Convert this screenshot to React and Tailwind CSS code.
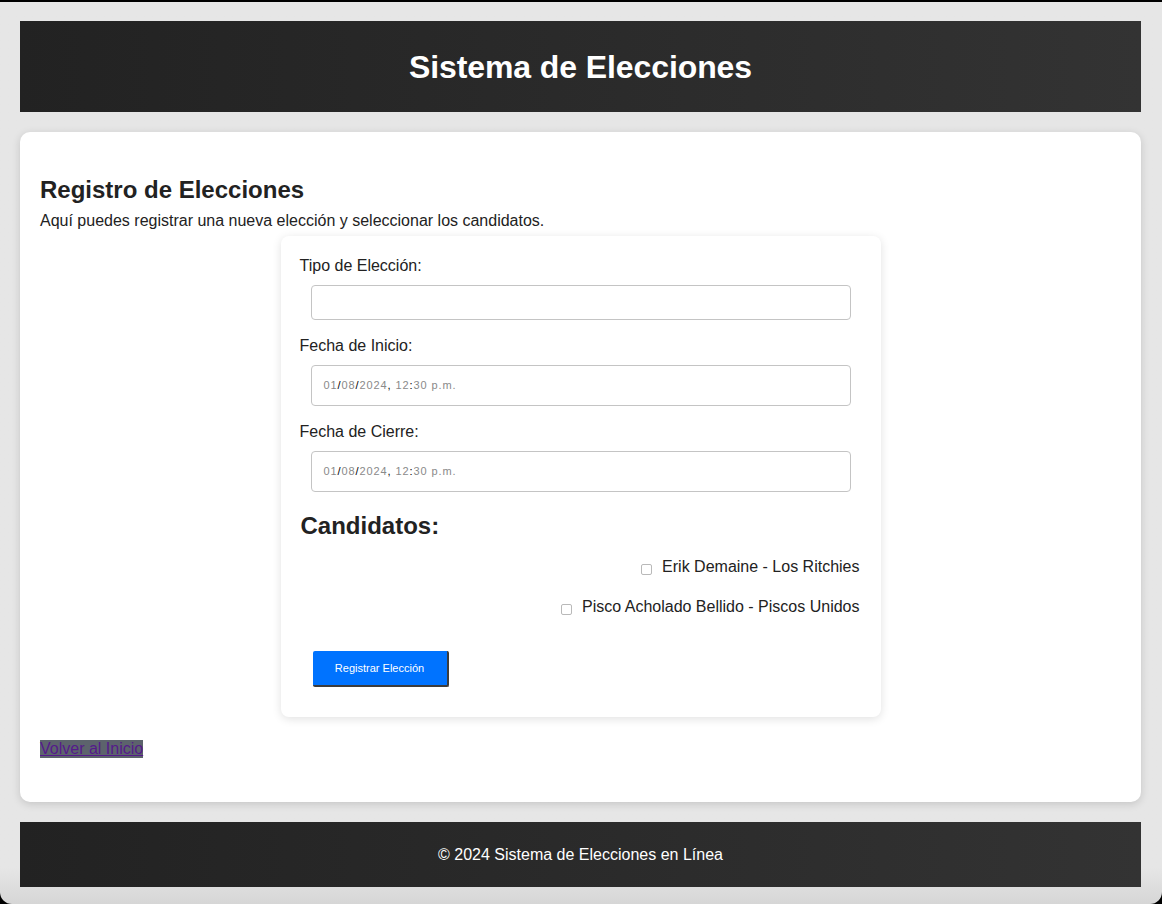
const candidatos = [
  { id: 1, nombre: 'Erik Demaine - Los Ritchies' },
  { id: 2, nombre: 'Pisco Acholado Bellido - Piscos Unidos' },
];

const FechaInput = () => (
  <div className="ml-[11px] mt-[10px] w-[540px] h-[41px] rounded-[4px] border border-[#c4c4c4] bg-white flex items-center pl-[12px] text-[11px] tracking-[0.9px] text-[#8a8a8a]">
    <span>01</span>
    <span className="text-black">/</span>
    <span>08</span>
    <span className="text-black">/</span>
    <span>2024</span>
    <span className="text-black">,&nbsp;</span>
    <span>12</span>
    <span className="text-black">:</span>
    <span>30 p.m.</span>
  </div>
);

export default function App() {
  return (
    <div className="h-[904px] bg-black pt-[2px] overflow-hidden" style={{ fontFamily: '"Liberation Sans", Arial, sans-serif' }}>
      <div className="h-[902px] rounded-b-[12px] bg-gradient-to-b from-[#e6e6e6] from-[96%] to-[#d6d6d6] pl-[20px] pr-[21px] pt-[19px] text-[#222]">
        {/* Header */}
        <header className="h-[91px] bg-gradient-to-r from-[#222222] to-[#333333] flex items-center justify-center">
          <h1 className="text-[32px] font-bold text-white tracking-[-0.1px]">Sistema de Elecciones</h1>
        </header>

        {/* Main */}
        <main className="mt-[20px] h-[670px] rounded-[10px] bg-white shadow-[0_2px_8px_rgba(0,0,0,0.15)] px-[20px] pt-[44px]">
          <h2 className="text-[24px] leading-[28px] font-bold text-[#222]">Registro de Elecciones</h2>
          <p className="mt-[8px] text-[16px] leading-[18px] text-[#222]">
            Aquí puedes registrar una nueva elección y seleccionar los candidatos.
          </p>

          <form className="mx-auto mt-[6px] w-[600px] h-[481px] rounded-[8px] bg-white shadow-[0_2px_10px_rgba(0,0,0,0.12)] pl-[19px] pr-[21px] pt-[21px]">
            <label className="block text-[16px] leading-[18px] text-[#222]">Tipo de Elección:</label>
            <input type="text" className="block ml-[11px] mt-[10px] h-[35px] w-[540px] rounded-[4px] border border-[#c4c4c4] bg-white outline-none" />

            <label className="block mt-[17px] text-[16px] leading-[18px] text-[#222]">Fecha de Inicio:</label>
            <FechaInput />

            <label className="block mt-[17px] text-[16px] leading-[18px] text-[#222]">Fecha de Cierre:</label>
            <FechaInput />

            <h3 className="mt-[20px] pl-[1px] text-[24px] leading-[28px] font-bold text-[#222]">Candidatos:</h3>

            <div className="mt-[18px] flex flex-col items-end gap-[22px]">
              {candidatos.map((c) => (
                <label key={c.id} className="flex items-center text-[16px] leading-[18px] text-[#222]">
                  <span className="mt-[4px] mr-[10px] inline-block w-[11px] h-[11px] rounded-[2px] border border-[#b9b9b9] bg-white"></span>
                  {c.nombre}
                </label>
              ))}
            </div>

            <button
              type="button"
              className="mt-[35px] ml-[13px] w-[136px] h-[36px] bg-[#0073ff] text-white text-[11px] rounded-[2px] border-r-2 border-b-2 border-[#3c3c3c]"
            >
              Registrar Elección
            </button>
          </form>

          <a href="#" className="inline-block mt-[23px] bg-[#5c636c] text-[#551a8b] underline text-[16px] leading-[18px]">
            Volver al Inicio
          </a>
        </main>

        {/* Footer */}
        <footer className="mt-[20px] h-[65px] bg-gradient-to-r from-[#222222] to-[#333333] flex items-center justify-center">
          <p className="text-[16px] text-white">© 2024 Sistema de Elecciones en Línea</p>
        </footer>
      </div>
    </div>
  );
}
